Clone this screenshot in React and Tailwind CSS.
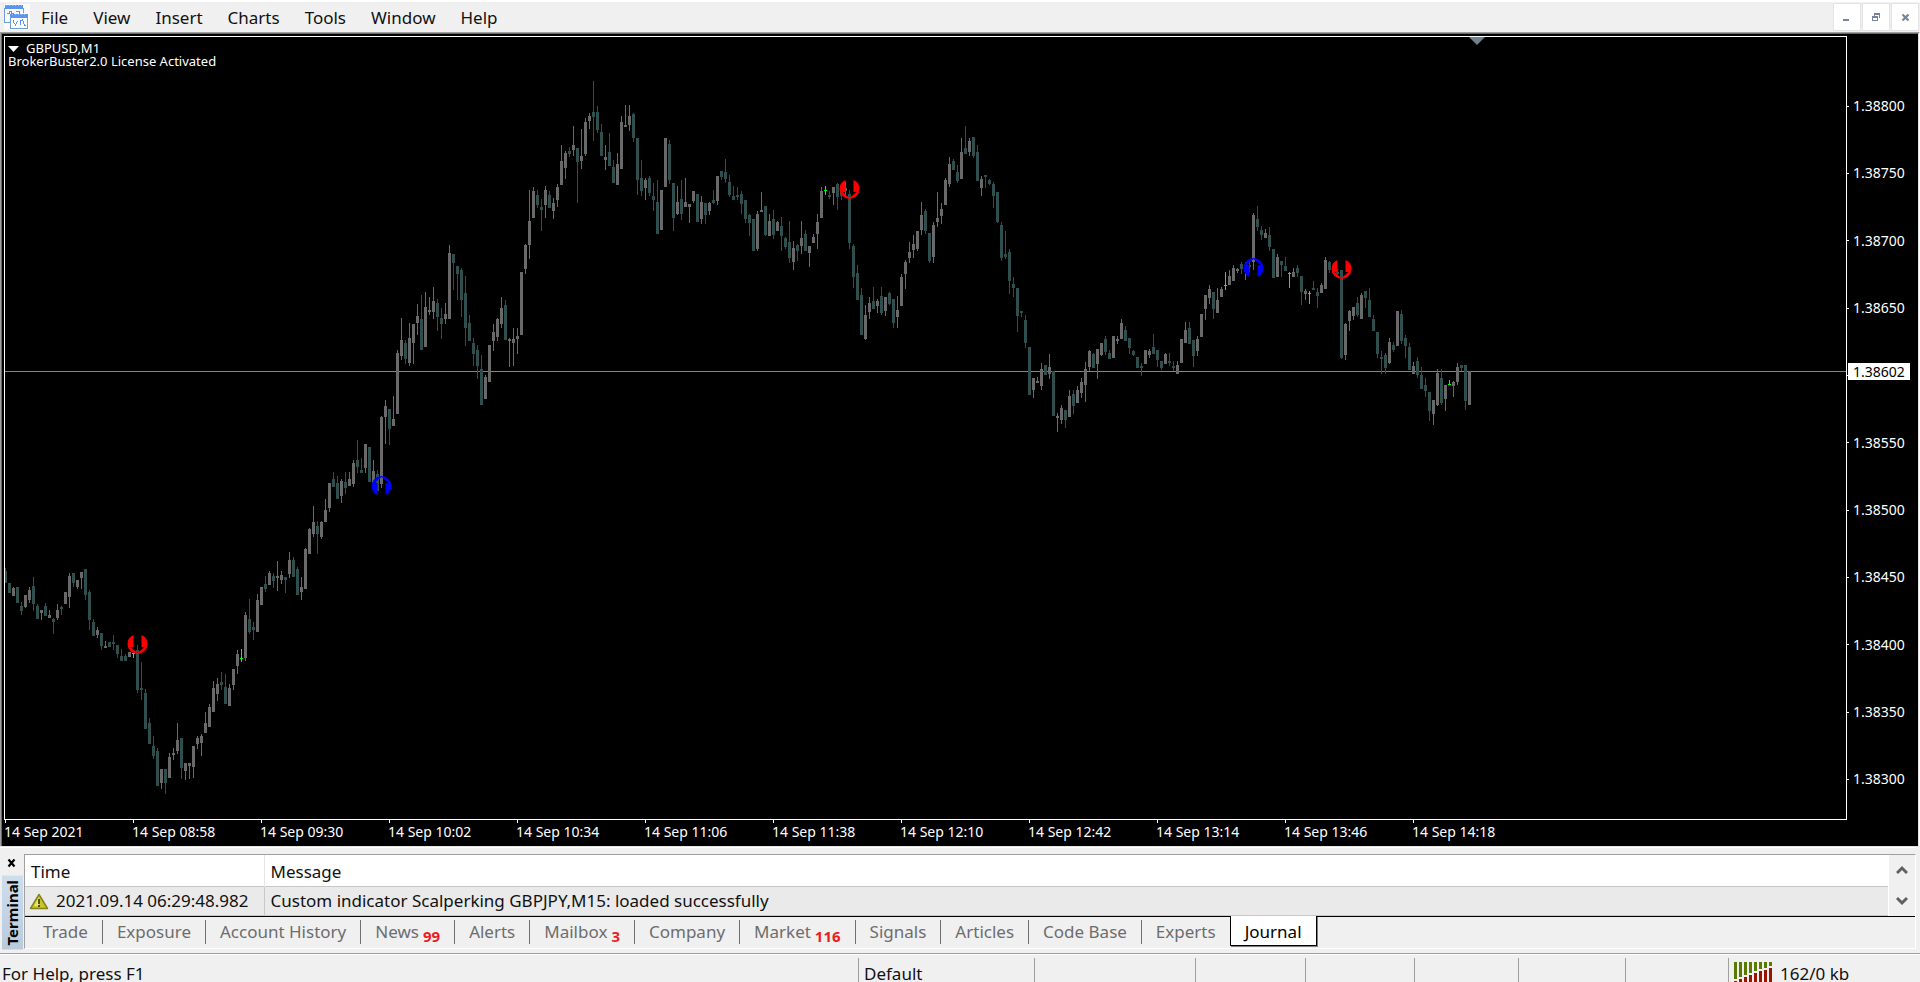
import React from 'react';

const MENU_ITEMS = ['File', 'View', 'Insert', 'Charts', 'Tools', 'Window', 'Help'];

const TABS = [
  { name: 'Trade' },
  { name: 'Exposure' },
  { name: 'Account History' },
  { name: 'News', count: 99 },
  { name: 'Alerts' },
  { name: 'Mailbox', count: 3 },
  { name: 'Company' },
  { name: 'Market', count: 116 },
  { name: 'Signals' },
  { name: 'Articles' },
  { name: 'Code Base' },
  { name: 'Experts' },
  { name: 'Journal', active: true },
];

const PRICES = ['1.38800', '1.38750', '1.38700', '1.38650', '', '1.38550', '1.38500', '1.38450', '1.38400', '1.38350', '1.38300'];

const TIMES = [
  '14 Sep 2021', '14 Sep 08:58', '14 Sep 09:30', '14 Sep 10:02', '14 Sep 10:34', '14 Sep 11:06',
  '14 Sep 11:38', '14 Sep 12:10', '14 Sep 12:42', '14 Sep 13:14', '14 Sep 13:46', '14 Sep 14:18',
];

const CANDLE_STEP = 4;
const CANDLE_COLORS = { u: '#696969', d: '#2f4f4f', x: '#00ff00' };

// direction (u = up, d = down, x = doji), high, body top, body bottom, low
const CANDLES = `
d 568 571 583 583|d 583 583 593 593|u 587 588 596 596|d 587 587 603 603|d 602 606 611 615|u 595 595 607 608|u 587 590 600 603|d 577 586 604 611
d 604 606 619 619|u 610 610 613 620|d 603 606 616 616|u 610 615 618 618|d 618 619 622 634|u 604 610 618 620|d 606 607 609 615|u 592 592 604 604
u 573 576 597 608|d 573 573 583 587|u 580 580 587 589|u 572 572 578 589|d 569 569 595 600|d 590 592 620 630|d 619 622 636 636|u 627 630 635 638
d 633 633 646 650|u 641 646 648 648|d 642 642 647 647|d 635 642 644 650|d 645 645 654 658|d 649 656 661 661|d 654 656 661 661|u 652 652 657 657
x 653 653 654 658|d 645 650 690 693|d 662 688 690 700|d 689 693 729 729|d 718 723 744 744|d 736 746 756 759|d 748 751 786 786|u 769 769 783 789
d 769 769 783 794|u 753 757 778 778|u 748 753 755 760|u 723 740 751 754|d 738 738 768 779|u 763 763 771 780|u 763 763 766 779|u 746 746 767 778
u 736 738 744 749|u 734 736 743 756|u 712 723 733 733|u 704 707 727 727|u 681 688 712 712|u 678 684 694 701|d 672 682 685 690|d 674 687 704 704
u 684 688 706 706|u 669 669 685 690|u 650 654 666 674|x 649 658 659 662|u 612 615 658 661|d 599 619 632 634|d 622 627 630 640|u 594 600 632 632
u 587 587 605 605|d 576 584 589 592|u 571 573 585 585|d 573 576 581 588|u 561 576 578 591|u 571 575 580 584|d 577 577 580 593|u 552 560 574 578
d 557 560 577 577|d 567 569 595 595|u 577 587 592 600|u 548 549 589 589|u 528 529 554 554|u 506 522 534 537|d 521 526 534 554|u 521 522 537 539
u 499 510 522 522|u 483 483 508 512|d 472 479 487 487|d 476 483 499 499|u 479 481 496 503|d 472 482 488 494|u 472 479 486 486|u 460 463 484 487
d 440 460 467 473|d 458 470 473 473|u 444 444 468 473|d 447 447 482 482|u 460 471 483 486|d 470 474 491 491|u 416 417 484 488|u 400 406 417 444
d 409 409 429 445|u 396 419 426 426|u 350 353 414 414|u 318 340 356 360|d 340 343 359 364|u 323 338 363 366|u 324 324 343 364|u 304 316 323 335
d 295 319 350 350|u 292 307 347 347|u 297 310 312 315|u 287 301 312 319|d 299 303 317 331|d 308 318 324 339|u 303 314 319 324|u 245 253 319 319
d 254 254 263 290|d 266 266 274 300|d 268 270 300 317|d 276 293 328 346|d 315 323 341 341|d 338 343 354 366|d 345 350 366 379|d 355 369 405 405
u 375 377 399 399|u 345 345 382 382|u 324 332 341 351|u 318 319 337 341|u 297 308 324 328|d 300 305 340 340|u 338 339 341 367|u 328 339 343 366
u 328 336 339 354|u 272 272 335 335|u 244 245 269 274|u 190 221 245 259|u 187 191 218 218|d 190 195 205 208|d 199 207 210 231|u 186 190 205 218
d 191 195 208 208|u 198 203 211 219|u 184 187 200 207|u 145 161 185 185|u 151 153 168 179|d 147 151 154 157|u 126 145 150 156|d 148 148 162 203
u 129 156 161 169|u 118 122 154 156|u 113 116 121 129|d 81 112 117 141|d 106 112 130 133|d 124 132 156 156|u 145 157 160 170|d 133 152 166 166
d 160 167 183 183|u 153 164 185 185|u 116 122 169 169|u 105 125 127 127|u 105 116 125 131|d 113 114 138 142|d 138 138 180 195|d 160 178 191 196
u 178 180 188 200|d 176 178 193 196|d 183 196 200 211|d 180 202 234 234|u 190 190 230 230|u 138 138 187 187|d 140 144 180 184|d 183 183 218 231
u 186 202 214 215|d 180 199 214 220|u 178 202 207 207|u 204 204 207 223|u 191 191 201 203|d 194 194 222 222|u 196 202 219 224|d 203 203 215 224
u 202 203 211 215|d 190 200 203 204|u 176 176 201 205|d 171 171 177 180|d 159 172 179 183|d 175 182 195 197|d 186 196 200 200|d 187 195 197 200
d 191 194 204 214|d 200 200 219 223|d 214 215 223 236|d 219 219 251 251|u 211 214 249 251|u 192 210 212 212|d 206 206 235 236|u 214 221 236 236
d 210 219 235 239|u 221 222 231 231|d 217 226 236 251|d 237 238 247 249|d 221 242 258 263|u 241 248 262 270|d 244 245 251 261|u 221 238 246 254
d 230 234 251 251|u 246 246 253 267|u 234 237 243 243|u 214 222 234 249|u 187 191 218 218|x 186 190 191 195|d 191 195 197 199|u 187 187 193 205
d 183 184 197 210|d 186 190 196 200|u 182 188 191 195|d 190 194 243 249|d 244 246 277 288|d 265 273 300 300|d 288 295 335 335|u 305 315 339 340
u 297 303 312 319|d 287 301 309 309|u 299 301 306 313|d 287 296 313 315|u 297 297 311 316|d 292 293 304 305|d 299 299 323 328|u 296 310 317 328
u 274 277 306 306|u 260 262 274 289|u 242 252 258 263|u 235 244 250 258|u 231 231 249 251|u 202 215 230 235|d 209 211 231 234|d 233 233 261 263
u 222 225 257 263|u 192 218 222 227|u 203 209 216 224|u 178 180 205 205|u 157 164 184 187|d 159 161 170 170|d 165 172 181 183|u 138 152 179 179
d 126 148 154 154|u 138 141 152 156|d 137 137 156 158|d 145 152 181 181|u 176 179 188 196|d 175 175 177 188|d 179 180 184 185|d 182 184 196 208
d 192 192 222 223|d 222 225 258 261|d 231 254 257 259|d 249 252 281 294|d 277 284 288 297|d 288 288 316 332|d 311 311 313 317|d 315 320 343 348
d 347 347 395 395|u 378 378 390 398|u 377 381 383 383|u 363 369 386 390|d 365 365 375 375|u 354 367 374 379|d 371 371 416 416|u 413 416 418 432
u 405 408 420 424|d 410 410 420 428|u 390 396 417 417|d 390 394 406 414|u 386 390 403 403|u 378 382 393 398|u 362 369 385 402|u 350 351 367 371
d 353 354 368 368|u 349 349 364 379|u 343 343 355 356|d 336 339 352 355|d 350 353 359 359|u 336 336 358 358|u 336 339 341 344|u 319 323 339 339
d 326 330 341 341|d 338 338 348 354|d 350 351 355 356|d 357 357 368 368|d 363 366 368 376|u 350 350 364 364|u 349 351 355 358|d 334 347 354 354
d 350 350 360 367|d 361 361 368 370|u 353 354 364 364|d 353 361 363 366|d 361 366 368 371|u 361 365 374 374|u 339 339 363 363|u 322 330 343 343
d 322 328 344 344|d 340 340 356 367|u 336 339 351 356|u 314 314 337 337|u 295 295 309 320|u 285 289 298 304|d 292 292 309 319|u 288 300 313 313
u 287 289 297 297|x 272 285 286 290|u 270 276 285 285|u 265 268 281 281|u 268 269 271 273|d 262 264 269 274|u 262 266 272 280|d 262 265 267 273
u 213 215 262 270|d 206 219 227 231|d 226 230 235 240|u 229 233 238 238|d 227 235 247 251|d 249 249 278 278|u 254 257 277 277|d 261 261 265 277
d 257 266 271 271|x 272 273 274 288|u 268 272 277 277|d 265 268 273 277|d 276 276 292 305|u 289 291 294 300|x 291 293 294 304|d 281 288 290 290
d 288 292 296 308|u 283 285 293 293|u 257 260 289 289|d 261 262 270 273|d 264 268 271 274|d 269 272 274 278|d 270 270 358 359|u 323 324 355 360
u 310 311 321 331|u 307 307 316 320|d 297 303 315 317|u 293 295 319 319|d 291 291 298 308|d 288 300 317 317|d 315 319 331 331|d 332 332 354 358
d 351 357 359 374|d 353 355 368 374|u 338 342 363 364|d 342 345 350 352|u 311 311 346 346|d 310 314 341 344|d 335 338 346 358|d 343 347 370 370
u 362 366 374 374|d 357 361 375 378|d 367 375 389 389|d 378 385 391 397|d 392 392 411 421|u 400 400 414 425|u 369 373 405 406|d 369 378 403 405
u 385 385 399 411|x 380 384 385 385|u 381 382 386 397|u 363 367 382 385|d 365 365 368 371|d 365 365 401 410|u 371 371 405 405
`
  .trim()
  .split(/[|\n]/)
  .map((row) => {
    const [dir, ...levels] = row.split(' ');
    const [high, top, bottom, low] = levels.map(Number);
    return { dir, high, top, bottom, low };
  });

const SIGNALS = [
  { type: 'sell', x: 137.5, y: 644 },
  { type: 'buy', x: 381.5, y: 486 },
  { type: 'sell', x: 849.5, y: 189 },
  { type: 'buy', x: 1253.5, y: 268 },
  { type: 'sell', x: 1341.5, y: 269 },
];

function Signal({ type, x, y }) {
  const flip = type === 'buy' ? -1 : 1;
  return (
    <path
      transform={`translate(${x} ${y}) scale(1 ${flip})`}
      fill={type === 'buy' ? '#0000ff' : '#ff0000'}
      d="M-4 -9 A10 10 0 0 0 -10 0 A10 10 0 0 0 10 0 A10 10 0 0 0 4 -9 V3 H7 L0 9 L-7 3 H-4 Z"
    />
  );
}

function AppLogo() {
  return (
    <svg width="26" height="26" viewBox="0 0 26 26" shapeRendering="crispEdges" aria-hidden="true">
      <rect width="26" height="26" fill="#fafafa" />
      <path d="M1 1h18v4H1z" fill="#5a96f0" />
      <path d="M2 1h1v1H2zM5 1h1v1H5zM8 1h1v1H8zM11 1h1v1h-1zM14 1h1v1h-1zM17 1h1v1h-1z" fill="#9cc2f5" />
      <path d="M.5 4v14.500h5.500M19.500 4v5" fill="none" stroke="#6d9fe0" />
      <path d="M3 9.500h2v-2h2v2h3M12 7.500h3v2" fill="none" stroke="#5a96f0" />
      <rect x="6" y="10" width="19" height="15" fill="#fff" />
      <path d="M6 10h18v4H6z" fill="#5a96f0" />
      <path d="M8 10h1v1H8zM11 10h1v1h-1zM14 10h1v1h-1zM17 10h1v1h-1zM20 10h1v1h-1z" fill="#9cc2f5" />
      <path d="M6.500 13v11.500h17V13" fill="none" stroke="#6d9fe0" />
      <path d="M9.500 16v2l2 3 2-4M16.500 21v-4l2-1 2 5h1" fill="none" stroke="#5a96f0" />
    </svg>
  );
}

function MenuBar() {
  return (
    <header className="flex h-8 shrink-0 justify-between border-t-2 border-white bg-[#f0f0f0]">
      <nav className="flex items-center pl-1">
        <AppLogo />
        {MENU_ITEMS.map((item) => (
          <button key={item} type="button" className="pt-0.5 pr-3 pl-[13px] text-[17px] leading-6 text-[#111] first-of-type:pl-[11px]">
            {item}
          </button>
        ))}
      </nav>
      <div className="flex gap-px pt-px pr-px text-[#76859a]">
        <button type="button" aria-label="Minimize" className="size-7 border border-[#e4e4e4] bg-white">
          <svg width="26" height="26" shapeRendering="crispEdges">
            <rect x="9" y="15" width="6" height="2" fill="currentColor" />
          </svg>
        </button>
        <button type="button" aria-label="Restore" className="size-7 border border-[#e4e4e4] bg-white">
          <svg width="26" height="26" shapeRendering="crispEdges">
            <path d="M11 9h6v2h-6zM16 11h1v3h-1zM11 11h1v1h-1zM9 12h6v2H9zM9 14h1v3H9zM14 14h1v3h-1zM9 16h6v1H9z" fill="currentColor" />
          </svg>
        </button>
        <button type="button" aria-label="Close" className="size-7 border border-[#e4e4e4] bg-white">
          <svg width="26" height="26">
            <path d="M10.500 10.500l6 6M16.500 10.500l-6 6" stroke="currentColor" strokeWidth="2.200" />
          </svg>
        </button>
      </div>
    </header>
  );
}

function Plot() {
  return (
    <div className="relative min-h-0 flex-1 overflow-hidden border border-white">
      <svg className="absolute inset-0 size-full" role="img" aria-label="GBPUSD,M1">
        {/* candle levels are measured from the window corner */}
        <g transform="translate(-5 -37)">
          <path d="M1469 37h16l-8 8z" fill="#708090" />
          <rect x="5" y="371" width="100%" height="1" fill="#778899" />
          <g shapeRendering="crispEdges">
            {CANDLES.map(({ dir, high, top, bottom, low }, i) => {
              const x = 5 + i * CANDLE_STEP;
              return (
                <g key={i} fill={CANDLE_COLORS[dir]}>
                  <rect x={x} y={high} width="1" height={low - high} />
                  <rect x={x - 1} y={top} width="3" height={bottom - top} />
                </g>
              );
            })}
          </g>
          {SIGNALS.map((signal) => (
            <Signal key={signal.x} {...signal} />
          ))}
        </g>
      </svg>
      <div className="relative pt-[5px] pl-[3px] text-[13px] leading-[13px] text-white">
        <button type="button" className="flex items-center gap-[7px]">
          <svg width="11" height="6" aria-hidden="true">
            <path d="M0 0h11L5.500 6z" fill="#fff" />
          </svg>
          GBPUSD,M1
        </button>
        <p>BrokerBuster2.0 License Activated</p>
      </div>
    </div>
  );
}

function Chart() {
  return (
    <main className="flex min-h-0 flex-1 border-t border-r border-[#a0a0a0] border-r-white">
      <div className="flex min-w-0 flex-1 border-l border-[#a0a0a0]">
        <div className="flex min-w-0 flex-1 border-t border-r border-l border-t-[#696969] border-r-[#e3e3e3] border-l-[#696969] bg-black pt-0.5 pl-0.5">
          <div className="flex min-w-0 flex-1 flex-col">
            <Plot />
            <div className="flex h-[26px] overflow-hidden pl-px text-sm leading-[18px] text-white">
              {TIMES.map((time) => (
                <div key={time} className="w-32 shrink-0">
                  <div className="h-[3px] w-px bg-white" />
                  <div className="-ml-px">{time}</div>
                </div>
              ))}
            </div>
          </div>
          <div className="relative w-[71px] text-sm leading-5 text-white">
            <div className="flex h-full flex-col justify-between pt-[60px] pb-[56px]">
              {PRICES.map((price, i) => (
                <div key={i} className="flex h-5 items-center gap-1">
                  <span className="h-px w-0.5 bg-white" />
                  {price}
                </div>
              ))}
            </div>
            <div className="absolute top-[327px] left-px h-[17px] w-[62px] bg-white pl-[5px] leading-[17px] text-black">1.38602</div>
          </div>
        </div>
      </div>
    </main>
  );
}

function WarningIcon() {
  return (
    <svg width="20" height="17" viewBox="0 0 20 17" aria-hidden="true">
      <path d="M10 1.500L18.500 15.500H1.500Z" fill="#c9c62c" stroke="#85831c" strokeWidth="1.500" strokeLinejoin="round" />
      <path d="M10 4L5 13h5z" fill="#e6e37a" />
      <path d="M9 6h2v5H9zM9 12h2v2H9z" fill="#55540f" />
    </svg>
  );
}

function Terminal() {
  return (
    <section className="flex shrink-0 border-t border-[#e3e3e3] bg-[#f0f0f0] pr-1">
      <div className="flex w-6 flex-col items-center border-t border-white pt-2.5">
        <button type="button" aria-label="Close terminal" className="block">
          <svg width="10" height="10">
            <path d="M1.500 1.500l6 7M7.500 1.500l-6 7" stroke="#000" strokeWidth="2.200" />
          </svg>
        </button>
        <div className="mt-2 flex w-[21px] flex-1 rotate-180 items-center justify-center bg-gradient-to-t from-[#cfdeed] to-[#b9cadb] text-[15px] font-bold [writing-mode:vertical-rl]">
          Terminal
        </div>
      </div>
      <div className="min-w-0 flex-1 border-t border-white pt-1.5">
        <div className="border-t border-r border-b border-l border-[#a0a0a0] border-r-white border-b-white">
          <div className="flex">
            <table className="flex-1 border-collapse text-left text-[17px] leading-6 text-[#111]">
              <thead>
                <tr className="h-8 border-b border-[#c8c8c8] bg-white">
                  <th className="w-[239px] border-r border-[#e5e5e5] px-1.5 pt-1 pb-0 font-normal">Time</th>
                  <th className="px-1.5 pt-1 pb-0 font-normal">Message</th>
                </tr>
              </thead>
              <tbody>
                <tr className="h-[29px] border-b border-[#c8c8c8] bg-[#eaeaea]">
                  <td className="border-r border-[#c8c8c8] py-0 pr-0 pl-1">
                    <div className="flex items-center gap-[7px] whitespace-nowrap">
                      <WarningIcon />
                      2021.09.14 06:29:48.982
                    </div>
                  </td>
                  <td className="px-1.5 py-0">Custom indicator Scalperking GBPJPY,M15: loaded successfully</td>
                </tr>
              </tbody>
            </table>
            <div className="flex w-[27px] flex-col items-center justify-between border-l border-white py-2.5 text-[#606060]">
              <button type="button" aria-label="Scroll up">
                <svg width="12" height="10" className="block">
                  <path d="M1 8l5-5 5 5" fill="none" stroke="currentColor" strokeWidth="3" />
                </svg>
              </button>
              <button type="button" aria-label="Scroll down">
                <svg width="12" height="10" className="block">
                  <path d="M1 2l5 5 5-5" fill="none" stroke="currentColor" strokeWidth="3" />
                </svg>
              </button>
            </div>
          </div>
          <div className="flex h-8 border-t border-black pl-1 text-[17px] leading-6 text-[#6d6d6d]">
            {TABS.map(({ name, count, active }) =>
              active ? (
                <button
                  key={name}
                  type="button"
                  className="-mt-px -ml-px h-[30px] border-r border-b border-l border-black bg-white px-3.5 pt-0.5 text-black shadow-[1px_1px_0_#808080]"
                >
                  {name}
                </button>
              ) : (
                <button key={name} type="button" className="mt-[3px] flex h-6 border-r border-[#707070] px-3.5">
                  {name}
                  {count && <span className="ml-1 pt-1 text-[15px] font-bold text-[#ed1c24]">{count}</span>}
                </button>
              ),
            )}
          </div>
        </div>
      </div>
    </section>
  );
}

function ConnectionBars() {
  return (
    <svg width="40" height="24" shapeRendering="crispEdges" aria-hidden="true">
      {[17, 15, 13, 11, 9, 7, 6, 4].map((h, i) => (
        <g key={i}>
          <rect x={i * 5} y="0" width="3" height={h} fill="#5a7a00" />
          <rect x={i * 5} y={h + 2} width="3" height={24 - h} fill="#9a1500" />
        </g>
      ))}
    </svg>
  );
}

function StatusBar() {
  return (
    <footer className="mt-1 flex h-[29px] shrink-0 overflow-hidden border-t border-[#a0a0a0] bg-[#f0f0f0] text-[17px] leading-6 text-[#111]">
      <div className="flex flex-1 border-t border-white pt-[3px]">
        <div className="flex-1 pt-1 pl-0.5">For Help, press F1</div>
        <div className="w-[176px] border-l border-[#a0a0a0] pt-1 pl-[5px]">Default</div>
        <div className="w-[161px] border-l border-[#a0a0a0]" />
        <div className="w-[110px] border-l border-[#a0a0a0]" />
        <div className="w-[109px] border-l border-[#a0a0a0]" />
        <div className="w-[104px] border-l border-[#a0a0a0]" />
        <div className="w-[107px] border-l border-[#a0a0a0]" />
        <div className="w-[103px] border-l border-[#a0a0a0]" />
        <div className="flex w-[192px] gap-1.5 border-l border-[#a0a0a0] pt-1 pl-[5px]">
          <ConnectionBars />
          162/0 kb
        </div>
      </div>
    </footer>
  );
}

export default function App() {
  return (
    <div className="flex h-screen flex-col overflow-hidden bg-[#f0f0f0] font-['Noto_Sans','Open_Sans',sans-serif]">
      <MenuBar />
      <Chart />
      <Terminal />
      <StatusBar />
    </div>
  );
}
